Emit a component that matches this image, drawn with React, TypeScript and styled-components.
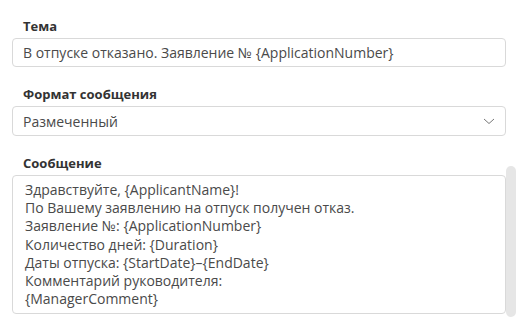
import React from "react";
import styled, { createGlobalStyle } from "styled-components";

const GlobalStyle = createGlobalStyle`
  html, body {
    margin: 0;
    padding: 0;
    background: #fff;
  }
  body {
    font-family: "Open Sans", "Liberation Sans", sans-serif;
    color: #333;
  }
`;

const Page = styled.div`
  display: flex;
  width: 525px;
  height: 329px;
  box-sizing: border-box;
  padding: 17px 9px 0 12px;
  overflow: hidden;
`;

const Form = styled.div`
  flex: 1;
  display: flex;
  flex-direction: column;
  gap: 18px;
`;

const Gutter = styled.div`
  width: 10px;
  flex: none;
`;

const ScrollThumb = styled.div`
  margin-top: 149px;
  width: 10px;
  height: 151px;
  border-radius: 5px;
  background: #e6e6e6;
`;

const Field = styled.div`
  display: flex;
  flex-direction: column;
`;

const Label = styled.label`
  font-size: 13px;
  line-height: 18px;
  font-weight: 700;
  color: #333;
  padding-left: 11px;
  margin-bottom: 3px;
`;

const Input = styled.input`
  box-sizing: border-box;
  height: 29px;
  width: 100%;
  margin: 0;
  padding: 0 10px;
  border: 1px solid #d9d9d9;
  border-radius: 4px;
  font-family: inherit;
  font-size: 14px;
  color: #4a4a4a;
  background: #fff;
  outline: none;
`;

const Select = styled.div`
  box-sizing: border-box;
  height: 30px;
  display: flex;
  align-items: center;
  justify-content: space-between;
  padding: 0 10px 0 10px;
  border: 1px solid #d9d9d9;
  border-radius: 4px;
  font-size: 14px;
  color: #4a4a4a;
  background: #fff;
`;

const Chevron = styled.svg`
  width: 12px;
  height: 7px;
  color: #777;
`;

const MessageBox = styled.div`
  box-sizing: border-box;
  height: 139px;
  padding: 5px 12px;
  border: 1px solid #d9d9d9;
  border-radius: 4px;
  font-size: 14px;
  line-height: 1.3;
  color: #4a4a4a;
  white-space: pre-line;
  overflow: hidden;
  background: #fff;
`;

const message = `Здравствуйте, {ApplicantName}!
По Вашему заявлению на отпуск получен отказ.
Заявление №: {ApplicationNumber}
Количество дней: {Duration}
Даты отпуска: {StartDate}–{EndDate}
Комментарий руководителя:
{ManagerComment}`;

export default function App() {
  return (
    <>
      <GlobalStyle />
      <Page>
        <Form>
          <Field>
            <Label>Тема</Label>
            <Input
              readOnly
              defaultValue="В отпуске отказано. Заявление № {ApplicationNumber}"
            />
          </Field>
          <Field>
            <Label>Формат сообщения</Label>
            <Select>
              <span>Размеченный</span>
              <Chevron viewBox="0 0 12 7">
                <path
                  d="M1 1 L6 5.5 L11 1"
                  fill="none"
                  stroke="currentColor"
                  strokeWidth="1"
                />
              </Chevron>
            </Select>
          </Field>
          <Field>
            <Label>Сообщение</Label>
            <MessageBox>{message}</MessageBox>
          </Field>
        </Form>
        <Gutter>
          <ScrollThumb />
        </Gutter>
      </Page>
    </>
  );
}
